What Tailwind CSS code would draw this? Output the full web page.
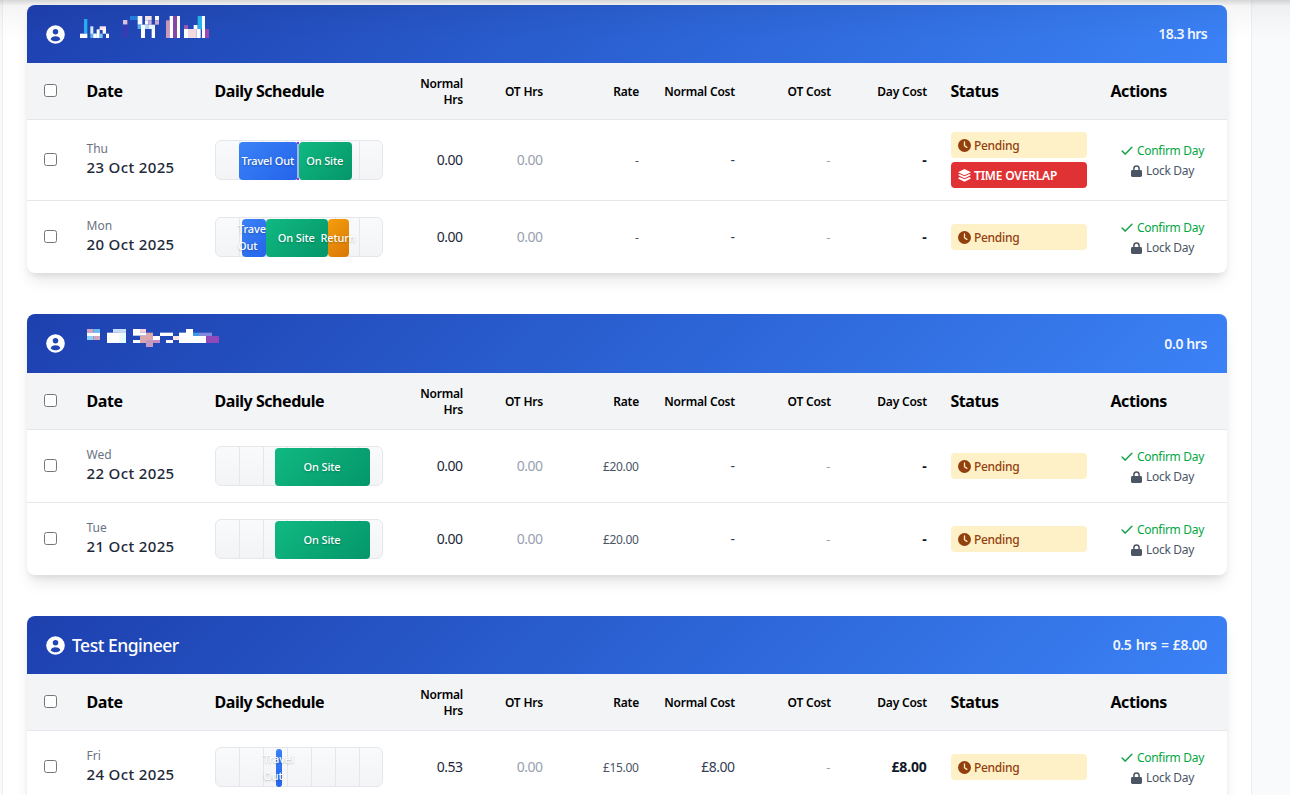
<!DOCTYPE html>
<html lang="en">
<head>
    <meta charset="UTF-8">
    <meta name="viewport" content="width=device-width, initial-scale=1.0">
    <title>Timesheets</title>
    <script src="https://cdn.jsdelivr.net/npm/@tailwindcss/browser@4"></script>
</head>
<body class="bg-[#f9fafb] font-['Noto_Sans','Open_Sans',sans-serif] text-gray-800 h-[795px] overflow-hidden">

    <!-- Icons -->
    <svg class="hidden">
        <symbol id="user" viewBox="0 0 20 20">
            <circle cx="10" cy="10" r="9.8" fill="#fff"/>
            <circle cx="10" cy="7.2" r="2.9" fill="#2046b4"/>
            <path d="M4.9 14.9c.5-2 2.300-3.100 5.100-3.100s4.600 1.100 5.100 3.100c-1.300 1.400-3.100 2.200-5.100 2.200s-3.800-.8-5.100-2.200z" fill="#2046b4"/>
        </symbol>
        <symbol id="clock" viewBox="0 0 12 12">
            <circle cx="6" cy="6" r="6" fill="#92400e"/>
            <path d="M6 2.700v3.500l2.200 1.500" fill="none" stroke="#fdf1c7" stroke-width="1.200" stroke-linecap="round" stroke-linejoin="round"/>
        </symbol>
        <symbol id="layers" viewBox="0 0 12 12">
            <path d="M6 .1 12 2.900 6 5.700 0 2.900z" fill="#fff"/>
            <path d="M1.400 4.500 6 6.600l4.600-2.100L12 5.600 6 8.500 0 5.600z" fill="#fff"/>
            <path d="M1.400 7.400 6 9.500l4.600-2.100L12 8.700 6 11.700 0 8.700z" fill="#fff"/>
        </symbol>
        <symbol id="check" viewBox="0 0 12 12">
            <path d="M1.100 6 4.300 9.100 10.900 2.200" fill="none" stroke="#16a34a" stroke-width="1.500" stroke-linecap="round" stroke-linejoin="round"/>
        </symbol>
        <symbol id="lock" viewBox="0 0 11 12">
            <path d="M2.900 6V3.600a2.600 2.600 0 0 1 5.200 0V6" fill="none" stroke="#4b5563" stroke-width="1.500"/>
            <rect x="0" y="5" width="11" height="7" rx="1.400" fill="#4b5563"/>
        </symbol>
    </svg>

    <!-- Shadow of the top bar -->
    <div class="absolute inset-x-0 top-0 h-10 z-10 bg-[linear-gradient(rgba(0,0,0,0.16),rgba(0,0,0,0.12)_2px,rgba(0,0,0,0.045)_6px,rgba(0,0,0,0.02)_20px,transparent)] pointer-events-none"></div>

    <main class="ml-[3px] w-[1248px] h-[795px] overflow-hidden bg-white px-6 pt-[5px] shadow-[0_0_2px_rgba(0,0,0,0.12)]" id="main">
    </main>

    <script>
        // Redacted names, drawn as blocks: x, y, width, height, colour
        const nameOne = {
            cls: "w-[130px] h-[25px] ml-[15px] mb-[13px]", box: "240 45 390 75",
            cells: [
                [252,57,10,44,"#28aef0"],[240,101,22,13,"#fff"],[271,79,9,23,"#d9eefb"],[271,101,20,13,"#58b4ee"],[280,101,10,13,"#fff"],
                [290,88,9,26,"#fff"],[299,79,19,11,"#fbeaf0"],[299,101,9,13,"#7cc6f4"],[308,88,10,13,"#fff"],[318,101,9,13,"#fff"],
                [369,60,13,14,"#dfc5dc"],[369,74,13,40,"#3a3ab4"],[390,48,23,12,"#2380e0"],[413,48,14,26,"#fff"],
                [413,74,10,13,"#58b4ee"],[423,74,12,40,"#fff"],[435,48,20,13,"#fbe6ea"],[435,61,10,13,"#fff"],
                [445,61,10,13,"#c9b4dc"],[435,74,10,13,"#b9dcf8"],[445,74,20,13,"#eef6fd"],[455,87,10,27,"#fff"],
                [465,48,12,13,"#fff"],[465,61,12,13,"#d6a9cc"],
                [498,61,11,53,"#cf98b4"],[509,48,10,66,"#fff"],[519,48,12,66,"#8548ac"],[531,48,9,66,"#fff"],
                [552,75,12,12,"#9a59b0"],[552,87,12,27,"#fff"],[564,87,26,27,"#f3dbe4"],[581,75,12,12,"#fff"],
                [593,48,13,39,"#28b4f0"],[590,87,12,27,"#fff"],[606,48,9,66,"#fff"],[615,87,12,27,"#9a48b4"]
            ]
        };
        const nameTwo = {
            cls: "w-[132px] h-[18px] ml-[22px] mb-[11px]", box: "261 177 396 54",
            cells: [
                [261,177,20,11,"#d2a3bd"],[281,177,19,11,"#62bdf2"],[261,188,39,10,"#fff"],[261,198,20,12,"#8fd0f7"],[281,198,19,12,"#d2a3bd"],
                [339,177,39,11,"#c5dcf8"],[321,188,57,31,"#fff"],[358,188,20,31,"#e8fbff"],
                [399,177,21,20,"#fff"],[420,177,18,11,"#f5cfe0"],[420,188,18,9,"#fff"],[438,188,21,22,"#dca8b0"],[420,197,18,22,"#dca8b0"],
                [399,210,21,9,"#fff"],[438,210,21,21,"#c49ac4"],[459,198,21,12,"#fff"],[459,210,21,9,"#c48bc4"],
                [480,188,39,10,"#fff"],[498,210,21,9,"#fff"],[519,198,18,12,"#fbe3e6"],[537,188,21,10,"#fff"],[558,177,21,21,"#fff"],
                [537,198,81,21,"#fff"],[579,188,18,10,"#3a9be8"],[597,188,39,10,"#8088dc"],[618,198,39,21,"#9148b8"]
            ]
        };

        const travel = "bg-linear-135 from-[#3b82f6] to-[#2563eb]";
        const onSite = "bg-linear-135 from-[#10b981] to-[#059669]";
        const returning = "bg-linear-135 from-[#f59e0b] to-[#d97706]";

        const cards = [
            { name: nameOne, total: "18.3 hrs", totalCls: "tracking-[-0.6px]", head: "h-[58px]", rows: [
                { day: "Thu", date: "23 Oct 2025", h: "h-[81px]", overlap: true, overlapMark: true,
                  values: ["0.00", "0.00", "-", "-", "-", "-"],
                  segs: [[23, 58.500, travel, "Travel Out"], [82.700, 53, onSite, "On Site"]] },
                { day: "Mon", date: "20 Oct 2025", h: "h-[72px]",
                  values: ["0.00", "0.00", "-", "-", "-", "-"],
                  segs: [[26, 23.700, travel, "Travel<br>Out"], [50, 61.500, onSite, "On Site"], [112, 21, returning, "Return"]] }
            ]},
            { name: nameTwo, total: "0.0 hrs", totalCls: "tracking-[-0.4px]", head: "h-[59px]", rows: [
                { day: "Wed", date: "22 Oct 2025", h: "h-[73px]",
                  values: ["0.00", "0.00", "£20.00", "-", "-", "-"],
                  segs: [[59, 95, onSite, "On Site"]] },
                { day: "Tue", date: "21 Oct 2025", h: "h-[72px]",
                  values: ["0.00", "0.00", "£20.00", "-", "-", "-"],
                  segs: [[59, 95, onSite, "On Site"]] }
            ]},
            { name: "Test Engineer", total: "0.5 hrs = £8.00", totalCls: "tracking-[-0.35px] [word-spacing:1px]", head: "h-[58px]", rows: [
                { day: "Fri", date: "24 Oct 2025", h: "h-[72px]",
                  values: ["0.53", "0.00", "£15.00", "£8.00", "-", "£8.00"],
                  segs: [[60, 6, travel, "Travel<br>Out"]] }
            ]}
        ];

        const valueStyles = [
            "pb-[2px] text-[14px] tracking-[-0.5px] text-gray-800",
            "pb-[2px] text-[14px] tracking-[-0.5px] text-gray-400",
            "pt-px text-[12px] tracking-[-0.35px] text-gray-600",
            "pb-px text-[14px] tracking-[-0.5px] text-gray-700",
            "pt-px text-[13px] text-gray-400",
            "pb-px text-[14px] tracking-[-0.2px] font-bold text-gray-900"
        ];

        const checkbox = `<input type="checkbox" class="block w-[13px] h-[13px] ml-[17px] mb-[2px]">`;

        function title(name) {
            if (typeof name === "string") {
                return `<h2 class="ml-[7px] text-[17.500px] font-medium tracking-[-0.5px]">${name}</h2>`;
            }
            const cells = name.cells.map(c => `<rect x="${c[0]}" y="${c[1]}" width="${c[2]}" height="${c[3]}" fill="${c[4]}"/>`).join("");
            return `<svg class="${name.cls}" viewBox="${name.box}" preserveAspectRatio="none">${cells}</svg>`;
        }

        function schedule(row) {
            const segs = row.segs.map(s => `
                <div class="absolute top-[1px] h-[38px] rounded-[4px] flex items-center justify-center text-[11px] leading-[17px] font-medium tracking-[-0.15px] text-white [text-shadow:0_1px_2px_rgba(0,0,0,0.25)] ${s[2]}" style="left:${s[0]}px;width:${s[1]}px">
                    <span class="whitespace-nowrap pb-[2px] mr-px">${s[3]}</span>
                </div>`).join("");
            const mark = row.overlapMark ? `<div class="absolute top-[1px] left-[81px] w-[2px] h-[38px] bg-[linear-gradient(#9333ea_2px,#a5b4ef_2px,#a5b4ef_36px,#9333ea_36px)]"></div>` : "";
            return `
                <div class="relative w-[168px] h-10 border border-gray-200 rounded-[6px] bg-linear-to-b from-[#f9fafb] to-[#f3f4f6]">
                    <div class="absolute inset-0 bg-[repeating-linear-gradient(to_right,transparent_0,transparent_23px,#e5e7eb_23px,#e5e7eb_24px)]"></div>
                    ${segs}${mark}
                </div>`;
        }

        function dayRow(row, last) {
            const values = row.values.map((v, i) => `<td class="pl-3 pr-[12.500px] text-right ${valueStyles[i]}">${v}</td>`).join("");
            const overlap = row.overlap ? `
                <div class="flex items-center gap-1 h-[26px] px-[7px] mt-1 rounded-[4px] bg-[#e03235] text-white text-[12px] font-semibold tracking-[-0.2px]">
                    <svg class="w-[13px] h-[13px] -mr-px"><use href="#layers"/></svg><span class="pt-[2px]">TIME OVERLAP</span>
                </div>` : "";
            return `
            <tr class="${row.h} ${last ? "" : "[&>td]:border-b [&>td]:border-gray-200"}">
                <td>${checkbox}</td>
                <td class="pl-[11.500px]">
                    <div class="text-[12px] leading-4 pt-px text-gray-500">${row.day}</div>
                    <div class="text-[15px] leading-6 font-medium tracking-[0.35px] -mt-[2px] mb-px">${row.date}</div>
                </td>
                <td class="px-3">${schedule(row)}</td>
                ${values}
                <td class="px-3">
                    <div class="flex items-center gap-1 h-[26px] px-[7px] rounded-[4px] bg-[#fef1c7] text-[#92400e] text-[12px] font-medium tracking-[-0.3px]">
                        <svg class="w-[13px] h-[13px] -mr-px"><use href="#clock"/></svg><span class="pt-[2px]">Pending</span>
                    </div>${overlap}
                </td>
                <td class="pl-[11px] pr-3 pt-[2px] text-[12px] leading-5 tracking-[-0.3px]">
                    <div class="flex items-center justify-center gap-1 text-green-600"><svg class="w-3 h-3 mb-px"><use href="#check"/></svg>Confirm Day</div>
                    <div class="flex items-center justify-center gap-1 text-gray-600"><svg class="w-[11px] h-3 mb-px"><use href="#lock"/></svg>Lock Day</div>
                </td>
            </tr>`;
        }

        document.getElementById("main").innerHTML = cards.map(card => `
            <section class="w-[1200px] mb-[41px] rounded-lg overflow-hidden bg-white shadow-[0_10px_15px_-3px_rgba(0,0,0,0.1),0_4px_6px_-2px_rgba(0,0,0,0.08)]">
                <div class="${card.head} flex items-center pl-[19px] pr-5 text-white bg-linear-135 from-[#1e40af] to-[#3b82f6]">
                    <svg class="w-[19px] h-[19px]"><use href="#user"/></svg>
                    ${title(card.name)}
                    <span class="ml-auto mb-px text-[14px] font-semibold text-white/95 ${card.totalCls}">${card.total}</span>
                </div>
                <table class="w-full table-fixed border-separate border-spacing-0">
                    <colgroup>
                        <col class="w-12"><col class="w-32"><col class="w-48"><col class="w-20"><col class="w-20"><col class="w-24">
                        <col class="w-24"><col class="w-24"><col class="w-24"><col class="w-40"><col class="w-32">
                    </colgroup>
                    <thead class="bg-gray-100 text-black">
                        <tr class="h-[57px] [&>th]:border-b [&>th]:border-gray-200 text-[12px] leading-4 tracking-[-0.2px]">
                            <th>${checkbox}</th>
                            <th class="px-[11.500px] text-left text-[16px] font-bold tracking-[-0.45px]">Date</th>
                            <th class="px-[11.500px] text-left text-[16px] font-bold tracking-[-0.45px]">Daily Schedule</th>
                            <th class="px-3 pt-[2px] text-right font-semibold">Normal Hrs</th>
                            <th class="px-3 pt-[2px] text-right font-semibold">OT Hrs</th>
                            <th class="px-3 pt-[2px] text-right font-semibold">Rate</th>
                            <th class="px-3 pt-[2px] text-right font-semibold whitespace-nowrap">Normal Cost</th>
                            <th class="px-3 pt-[2px] text-right font-semibold">OT Cost</th>
                            <th class="px-3 pt-[2px] text-right font-semibold">Day Cost</th>
                            <th class="px-[11.500px] text-left text-[16px] font-bold tracking-[-0.45px]">Status</th>
                            <th class="px-[11.500px] text-left text-[16px] font-bold tracking-[-0.45px]">Actions</th>
                        </tr>
                    </thead>
                    <tbody>${card.rows.map((r, i) => dayRow(r, i === card.rows.length - 1)).join("")}</tbody>
                </table>
            </section>`).join("");
    </script>

</body>
</html>
